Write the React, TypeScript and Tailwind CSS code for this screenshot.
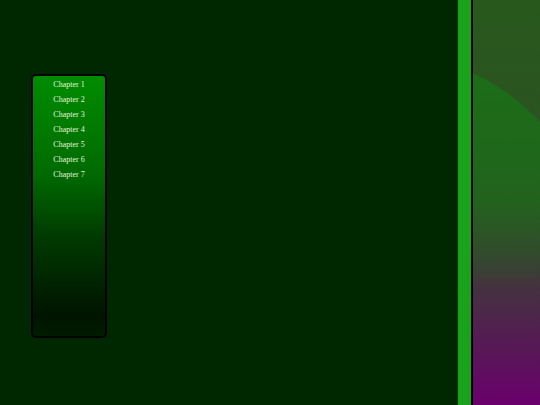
import React from 'react';

const chapters = ['Chapter 1', 'Chapter 2', 'Chapter 3', 'Chapter 4', 'Chapter 5', 'Chapter 6', 'Chapter 7'];

export default function App() {
  return (
    <div className="flex h-[405px] w-[540px] overflow-hidden bg-[#002800]">
      <div className="flex-1 pl-[31px] pt-[74px]">
        <div className="h-[264px] w-[76px] rounded-[5px] border-2 border-black bg-[linear-gradient(to_bottom,#008c00_0%,#006a00_38%,#003a00_62%,#001400_92%,#001c00_100%)] pt-[1px]">
          <ul className="flex flex-col items-center font-['Liberation_Serif',serif] text-[8px] leading-[15px] text-[#e4f4dc]">
            {chapters.map((c) => (
              <li key={c}>{c}</li>
            ))}
          </ul>
        </div>
      </div>
      <div className="flex w-[16px] border-l border-[#0c3c0c] border-r-2 border-r-black bg-[#1aa31a]" />
      <div className="relative w-[67px] overflow-hidden bg-[linear-gradient(to_bottom,#28581c_0%,#2c5222_40%,#3c3c36_65%,#6a006c_100%)]">
        <div className="absolute left-[-303px] top-[53px] h-[426px] w-[426px] rounded-full bg-[linear-gradient(to_bottom,#1b6e18_0%,rgba(27,110,24,0.65)_35%,rgba(27,110,24,0)_55%)]" />
      </div>
    </div>
  );
}
